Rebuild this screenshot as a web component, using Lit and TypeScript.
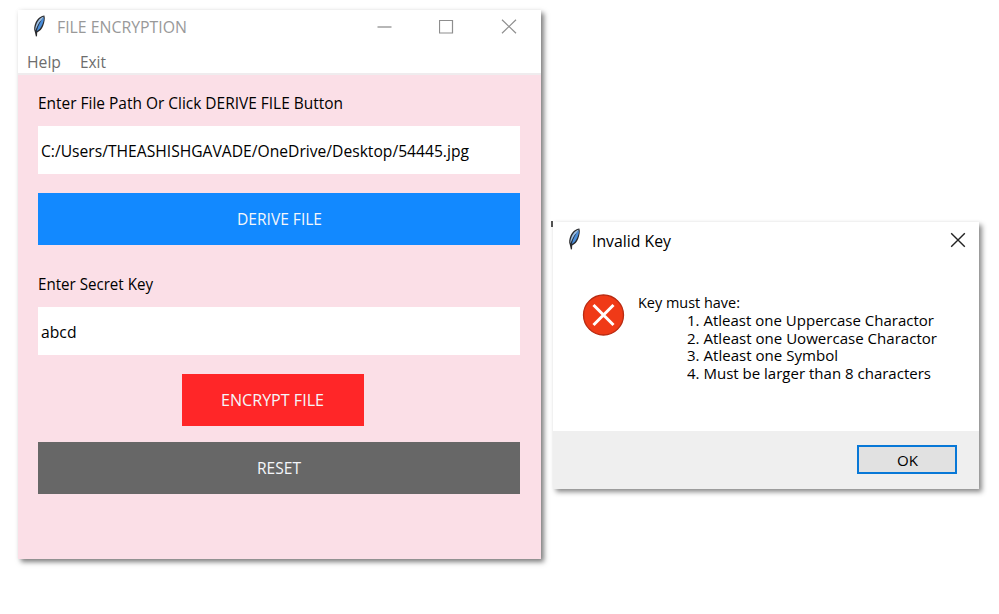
import { LitElement, html, css, svg } from "lit";
import { customElement, property } from "lit/decorators.js";

/** A single line of text condensed or widened to a given width. */
@customElement("fit-text")
class FitText extends LitElement {
  static styles = css`
    :host { display: block; white-space: pre; flex: none; }
    .line { display: inline-block; transform-origin: 0 50%; }
  `;
  @property({ type: Number }) width = 100;
  @property() text = "";
  updated() {
    const line = this.renderRoot.querySelector(".line") as HTMLElement;
    this.style.width = this.width + "px";
    line.style.transform = "none";
    const natural = line.getBoundingClientRect().width;
    if (natural) line.style.transform = `scaleX(${this.width / natural})`;
  }
  render() {
    return html`<span class="line">${this.text}</span>`;
  }
}

const feather = svg`
  <path d="M14.4 .4C10.6 .8 7.2 3.8 5.6 7.6C4.2 11 3.6 14.2 4.8 16.8L5.9 21.4L7 21.2L7.2 17.4C9.8 16.4 12 14 13.2 10.8C14.4 7.4 15.4 3.4 14.4 .4Z" fill="#2a2a2c"/>
  <path d="M13.4 1.6C10.4 2.8 8 5.4 6.7 8.6C5.6 11.2 5.1 13.6 5.5 15.4C7.4 10.6 9.6 6.6 13.4 2.8Z" fill="#9cbfe4"/>
  <path d="M13.7 2.2C10.4 5.8 7.8 10.4 6.5 16.2C9.2 15.2 11 12.6 12.2 9.8C13.3 7.2 14.2 4.4 13.7 2.2Z" fill="#4a8edb"/>
  <path d="M10.4 6.4C8.6 9.4 7 12.6 6 17.2" fill="none" stroke="#1b2c42" stroke-width=".7"/>`;

@customElement("app-root")
class AppRoot extends LitElement {
  static styles = css`
    * { box-sizing: border-box; }
    :host {
      display: block; position: relative; width: 999px; height: 614px; overflow: hidden;
      background: #fff; color: #000; font: 16.5px/24px "Open Sans", "Noto Sans", sans-serif;
    }
    svg { display: block; flex: none; }
    .window {
      position: absolute; left: 18px; top: 10px; width: 523px; height: 549px;
      display: flex; flex-direction: column; background: #fff;
      box-shadow: 3px 3px 5px rgba(0, 0, 0, .5), 0 0 5px rgba(0, 0, 0, .04);
    }
    .titlebar { display: flex; height: 36px; padding: 5px 24px 0 12px; color: #999; }
    .titlebar fit-text { margin: 0 0 0 9px; }
    .controls { display: flex; margin: 4px 0 0 auto; gap: 47px; }
    .menu { display: flex; height: 27px; padding: 4px 9px 0; gap: 19px; color: #6d6d6d; }
    .body {
      flex: 1; display: flex; flex-direction: column; padding: 16px 21px 0 20px;
      background: #fbdfe7; border-top: 2px solid #efecee;
    }
    .field {
      display: flex; align-items: center; height: 48px; padding: 1px 0 0 3px;
      background: #fff; margin-bottom: 19px;
    }
    .label { height: 35px; }
    .button {
      display: flex; align-items: center; justify-content: center;
      height: 52px; color: #f4f6fa; flex: none; padding-bottom: 1px;
    }
    .derive { background: #1289ff; margin-bottom: 27px; }
    .encrypt { background: #ff2628; width: 182px; margin: 0 0 16px 143.5px; }
    .reset { background: #676767; }
    .caret { position: absolute; left: 551px; top: 221px; width: 2px; height: 6px; background: #555; }
    .dialog {
      position: absolute; left: 553px; top: 222px; width: 426px; height: 267px;
      display: flex; flex-direction: column; background: #fff;
      box-shadow: 3px 3px 5px rgba(0, 0, 0, .45), 0 0 5px rgba(0, 0, 0, .04);
    }
    .dialog-title { display: flex; height: 71px; padding: 6px 13px 0 12px; }
    .dialog-title fit-text { margin: 1px 0 0 9px; }
    .close { margin: 4px 0 0 auto; }
    .message { flex: 1; display: flex; padding-left: 29px; gap: 13px; font-size: 15px; line-height: 17.8px; }
    .message-text { padding-top: 1px; }
    .rules { padding-left: 49px; }
    .footer {
      height: 58px; padding: 14px 22px 0 0; display: flex; justify-content: flex-end; background: #efefef;
    }
    .ok {
      width: 100px; height: 29px; border: 2px solid #0878d7; background: #e1e1e1;
      display: flex; align-items: center; justify-content: center; font-size: 15px;
    }
  `;

  private rules: [string, number][] = [
    ["1. Atleast one Uppercase Charactor", 247],
    ["2. Atleast one Uowercase Charactor", 250],
    ["3. Atleast one Symbol", 151],
    ["4. Must be larger than 8 characters", 244],
  ];

  private text(text: string, width: number) {
    return html`<fit-text .text=${text} .width=${width}></fit-text>`;
  }

  render() {
    return html`
      <section class="window">
        <header class="titlebar">
          <svg width="18" height="22" viewBox="0 0 18 22">${feather}</svg>
          ${this.text("FILE ENCRYPTION", 130)}
          <div class="controls">
            <svg width="15" height="15" viewBox="0 0 15 15"><path d="M.5 8H14.5" stroke="#999" stroke-width="1.4"/></svg>
            <svg width="15" height="15" viewBox="0 0 15 15"><path d="M.5 1.5H13.5V14H.5Z" fill="none" stroke="#8e8e8e" stroke-width="1.2"/></svg>
            <svg width="16" height="15" viewBox="0 0 16 15"><path d="M1 .8L15 14.2M15 .8L1 14.2" stroke="#8e8e8e" stroke-width="1.2"/></svg>
          </div>
        </header>
        <nav class="menu">${this.text("Help", 34)}${this.text("Exit", 26)}</nav>
        <main class="body">
          <div class="label">${this.text("Enter File Path Or Click DERIVE FILE Button", 305)}</div>
          <div class="field">${this.text("C:/Users/THEASHISHGAVADE/OneDrive/Desktop/54445.jpg", 428)}</div>
          <div class="button derive">${this.text("DERIVE FILE", 85)}</div>
          <div class="label">${this.text("Enter Secret Key", 115)}</div>
          <div class="field">${this.text("abcd", 35.5)}</div>
          <div class="button encrypt">${this.text("ENCRYPT FILE", 103)}</div>
          <div class="button reset">${this.text("RESET", 44)}</div>
        </main>
      </section>
      <span class="caret"></span>
      <section class="dialog">
        <header class="dialog-title">
          <svg width="18" height="22" viewBox="0 0 18 22">${feather}</svg>
          ${this.text("Invalid Key", 79)}
          <svg class="close" width="16" height="16" viewBox="0 0 16 16"><path d="M1.2 1.2L14.8 14.8M14.8 1.2L1.2 14.8" stroke="#222" stroke-width="1.4"/></svg>
        </header>
        <div class="message">
          <svg width="43" height="43" viewBox="0 0 43 43">
            <circle cx="21.5" cy="22" r="20" fill="#f03a17" stroke="#b92b12" stroke-width="1.3"/>
            <path d="M11.5 12L31.5 32M31.5 12L11.5 32" stroke="#fff" stroke-width="3"/>
          </svg>
          <div class="message-text">
            ${this.text("Key must have:", 102)}
            <div class="rules">${this.rules.map(([t, w]) => this.text(t, w))}</div>
          </div>
        </div>
        <footer class="footer"><div class="ok">${this.text("OK", 21)}</div></footer>
      </section>
    `;
  }
}
